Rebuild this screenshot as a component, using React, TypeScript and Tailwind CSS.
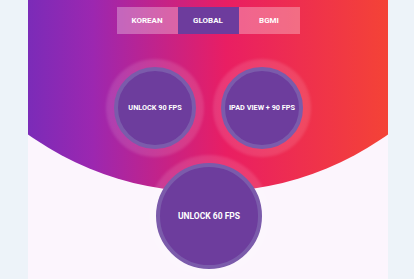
import React from "react";

const font = { fontFamily: "Roboto, 'Liberation Sans', Arial, sans-serif" };

function Tab({ label, active }: { label: string; active?: boolean }) {
  return (
    <div
      className={
        "w-[61px] h-[27px] flex items-center justify-center text-[8px] font-bold text-white uppercase " +
        (active ? "bg-[#6d3c9d]" : "bg-white/30")
      }
    >
      {label}
    </div>
  );
}

export default function App() {
  return (
    <div className="min-h-screen bg-[#edf3f9] flex" style={font}>
      <div className="relative ml-[28px] w-[360px] h-[279px] bg-[#fcf5fd] overflow-hidden">
        <div className="absolute inset-x-0 top-0 h-[192px] bg-[linear-gradient(90deg,#7b2bb8_0%,#9c27b0_18%,#e91e63_55%,#f44336_100%)] [clip-path:circle(310px_at_50%_-118px)]" />
        <div className="relative flex flex-col items-center pt-[7px]">
          <div className="flex">
            <Tab label="Korean" />
            <Tab label="Global" active />
            <Tab label="BGMI" />
          </div>
          <div className="flex gap-[25px] mt-[33px] ml-[1px]">
            <div className="w-[82px] h-[82px] rounded-full border-4 border-[#7b5bab] bg-[#6d3d9d] shadow-[0_0_3px_8px_rgba(255,255,255,0.12)] flex items-center justify-center text-[7.3px] font-bold text-white">
              UNLOCK 90 FPS
            </div>
            <div className="w-[82px] h-[82px] rounded-full border-4 border-[#7b5bab] bg-[#6d3d9d] shadow-[0_0_3px_8px_rgba(255,255,255,0.12)] flex items-center justify-center text-[7.3px] font-bold text-white whitespace-nowrap">
              IPAD VIEW + 90 FPS
            </div>
          </div>
          <div className="mt-[14px] ml-[2px] w-[106px] h-[106px] rounded-full border-4 border-[#7b5bab] bg-[#6d3d9d] shadow-[0_0_3px_8px_rgba(255,255,255,0.12)] flex items-center justify-center text-[8.5px] font-bold text-white">
            UNLOCK 60 FPS
          </div>
        </div>
      </div>
    </div>
  );
}
